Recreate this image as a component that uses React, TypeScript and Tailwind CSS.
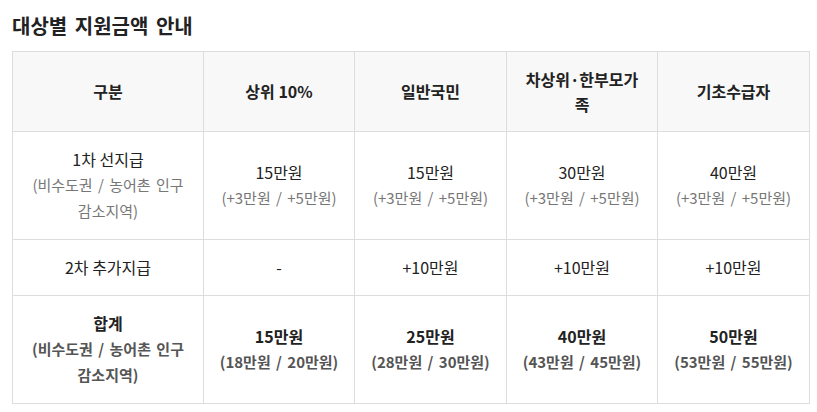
import React from "react";

const font = { fontFamily: '"Noto Sans CJK KR", "Noto Sans", sans-serif' };

function Sub({ children, bold }: { children: React.ReactNode; bold?: boolean }) {
  return (
    <span
      className={`block text-[15px] leading-[26px] [word-spacing:2px] ${bold ? "font-bold text-[#555]" : "text-[#777]"}`}
    >
      {children}
    </span>
  );
}

export default function App() {
  const th =
    "border border-[#dddddd] bg-[#f8f8f8] px-3 py-[15px] text-center align-middle text-[16px] font-bold leading-[24.5px] text-[#222]";
  const td =
    "border border-[#dddddd] px-3 py-[15px] text-center align-middle text-[16px] leading-[25px] text-[#222]";
  const tdb = td + " font-bold";
  return (
    <div className="w-[817px] h-[412px] bg-white px-3 pt-[12px]" style={font}>
      <h2 className="text-[20px] font-bold leading-[28px] text-[#222] mb-[11px] [word-spacing:3px]">
        대상별 지원금액 안내
      </h2>
      <table className="w-[797px] border-collapse table-fixed">
        <colgroup>
          <col className="w-[191px]" />
          <col className="w-[151px]" />
          <col className="w-[152px]" />
          <col className="w-[151px]" />
          <col className="w-[152px]" />
        </colgroup>
        <thead>
          <tr>
            <th className={th}>구분</th>
            <th className={th}>상위 10%</th>
            <th className={th}>일반국민</th>
            <th className={th}>
              차상위·한부모가
              <br />족
            </th>
            <th className={th}>기초수급자</th>
          </tr>
        </thead>
        <tbody>
          <tr>
            <td className={td}>
              1차 선지급
              <Sub>
                (비수도권 / 농어촌 인구
                <br />
                감소지역)
              </Sub>
            </td>
            <td className={td}>15만원<Sub>(+3만원 / +5만원)</Sub></td>
            <td className={td}>15만원<Sub>(+3만원 / +5만원)</Sub></td>
            <td className={td}>30만원<Sub>(+3만원 / +5만원)</Sub></td>
            <td className={td}>40만원<Sub>(+3만원 / +5만원)</Sub></td>
          </tr>
          <tr>
            <td className={td}>2차 추가지급</td>
            <td className={td}>-</td>
            <td className={td}>+10만원</td>
            <td className={td}>+10만원</td>
            <td className={td}>+10만원</td>
          </tr>
          <tr>
            <td className={tdb}>
              합계
              <Sub bold>
                (비수도권 / 농어촌 인구
                <br />
                감소지역)
              </Sub>
            </td>
            <td className={tdb}>15만원<Sub bold>(18만원 / 20만원)</Sub></td>
            <td className={tdb}>25만원<Sub bold>(28만원 / 30만원)</Sub></td>
            <td className={tdb}>40만원<Sub bold>(43만원 / 45만원)</Sub></td>
            <td className={tdb}>50만원<Sub bold>(53만원 / 55만원)</Sub></td>
          </tr>
        </tbody>
      </table>
    </div>
  );
}
